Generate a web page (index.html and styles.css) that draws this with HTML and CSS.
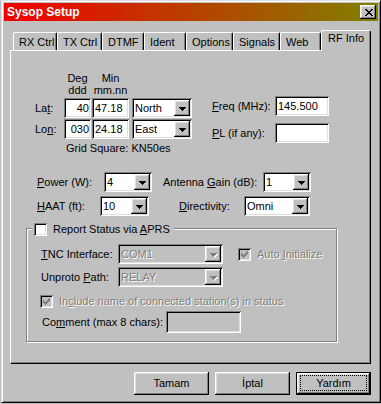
FILE: index.html
```html
<!DOCTYPE html>
<html>
<head>
<meta charset="utf-8">
<title>Sysop Setup</title>
<link rel="stylesheet" href="styles.css">
</head>
<body>
<div class="window">
  <div class="titlebar">
    <span class="title">Sysop Setup</span>
    <div class="close">
      <svg width="8" height="7" viewBox="0 0 8 7"><path fill="#000" d="M0 0h2v1H0zM6 0h2v1H6zM1 1h2v1H1zM5 1h2v1H5zM2 2h4v1H2zM3 3h2v1H3zM2 4h4v1H2zM1 5h2v1H1zM5 5h2v1H5zM0 6h2v1H0zM6 6h2v1H6z"/></svg>
    </div>
  </div>
  <div class="dialog">
    <div class="tabs">
      <div class="tab t-rx">RX Ctrl</div>
      <div class="tab t-tx">TX Ctrl</div>
      <div class="tab t-dtmf">DTMF</div>
      <div class="tab t-ident">Ident</div>
      <div class="tab t-opt">Options</div>
      <div class="tab t-sig">Signals</div>
      <div class="tab t-web">Web</div>
      <div class="tab active t-rf">RF Info</div>
    </div>
    <div class="panel">
      <div class="sec-loc">
        <div class="coords">
          <div class="cell"></div>
          <div class="hdr hdr-deg">Deg<br>ddd</div>
          <div class="hdr hdr-min">Min<br>mm.nn</div>
          <div class="cell"></div>

          <div class="lbl">La<u>t</u>:</div>
          <div class="field f-deg">40</div>
          <div class="field f-min">47.18</div>
          <div class="combo c-dir"><span class="val">North</span><span class="drop"><svg width="7" height="4" viewBox="0 0 7 4"><path fill="#000" d="M0 0h7v1H0zM1 1h5v1H1zM2 2h3v1H2zM3 3h1v1H3z"/></svg></span></div>

          <div class="lbl">Lo<u>n</u>:</div>
          <div class="field f-deg">030</div>
          <div class="field f-min">24.18</div>
          <div class="combo c-dir"><span class="val">East</span><span class="drop"><svg width="7" height="4" viewBox="0 0 7 4"><path fill="#000" d="M0 0h7v1H0zM1 1h5v1H1zM2 2h3v1H2zM3 3h1v1H3z"/></svg></span></div>

          <div class="cell"></div>
          <div class="gridsq">Grid Square: KN50es</div>
        </div>
        <div class="freq">
          <div class="frow">
            <div class="lbl l-freq"><u>F</u>req (MHz):</div>
            <div class="field f-freq">145.500</div>
          </div>
          <div class="frow pl">
            <div class="lbl l-freq"><u>P</u>L (if any):</div>
            <div class="field f-freq"></div>
          </div>
        </div>
      </div>

      <div class="row2">
        <div class="lbl l-power"><u>P</u>ower (W):</div>
        <div class="combo c-small"><span class="val">4</span><span class="drop"><svg width="7" height="4" viewBox="0 0 7 4"><path fill="#000" d="M0 0h7v1H0zM1 1h5v1H1zM2 2h3v1H2zM3 3h1v1H3z"/></svg></span></div>
        <div class="lbl l-gain">Antenna <u>G</u>ain (dB):</div>
        <div class="combo c-small"><span class="val">1</span><span class="drop"><svg width="7" height="4" viewBox="0 0 7 4"><path fill="#000" d="M0 0h7v1H0zM1 1h5v1H1zM2 2h3v1H2zM3 3h1v1H3z"/></svg></span></div>
      </div>
      <div class="row2 second">
        <div class="lbl l-haat"><u>H</u>AAT (ft):</div>
        <div class="combo c-haat"><span class="val">10</span><span class="drop"><svg width="7" height="4" viewBox="0 0 7 4"><path fill="#000" d="M0 0h7v1H0zM1 1h5v1H1zM2 2h3v1H2zM3 3h1v1H3z"/></svg></span></div>
        <div class="lbl l-dir"><u>D</u>irectivity:</div>
        <div class="combo c-omni"><span class="val">Omni</span><span class="drop"><svg width="7" height="4" viewBox="0 0 7 4"><path fill="#000" d="M0 0h7v1H0zM1 1h5v1H1zM2 2h3v1H2zM3 3h1v1H3z"/></svg></span></div>
      </div>

      <div class="group">
        <div class="legend">
          <span class="check"></span>
          <span class="legend-text">Report Status via <u>A</u>PRS</span>
        </div>
        <div class="grow first">
          <div class="lbl l-tnc"><u>T</u>NC Interface:</div>
          <div class="combo disabled c-wide"><span class="val">COM1</span><span class="drop"><svg width="8" height="5" viewBox="0 0 8 5"><path fill="#fff" d="M1 1h7v1H1zM2 2h5v1H2zM3 3h3v1H3zM4 4h1v1H4z"/><path fill="#808080" d="M0 0h7v1H0zM1 1h5v1H1zM2 2h3v1H2zM3 3h1v1H3z"/></svg></span></div>
          <span class="check disabled c-auto"><svg width="7" height="7" viewBox="0 0 7 7"><path fill="#808080" d="M6 0h1v1H6zM5 1h2v1H5zM0 2h1v1H0zM4 2h3v1H4zM0 3h2v1H0zM3 3h3v1H3zM0 4h5v1H0zM1 5h3v1H1zM2 6h1v1H2z"/></svg></span>
          <span class="dis-text auto-text">Auto <u>I</u>nitialize</span>
        </div>
        <div class="grow">
          <div class="lbl l-tnc">Unproto <u>P</u>ath:</div>
          <div class="combo disabled c-wide"><span class="val">RELAY</span><span class="drop"><svg width="8" height="5" viewBox="0 0 8 5"><path fill="#fff" d="M1 1h7v1H1zM2 2h5v1H2zM3 3h3v1H3zM4 4h1v1H4z"/><path fill="#808080" d="M0 0h7v1H0zM1 1h5v1H1zM2 2h3v1H2zM3 3h1v1H3z"/></svg></span></div>
        </div>
        <div class="crow">
          <span class="check disabled"><svg width="7" height="7" viewBox="0 0 7 7"><path fill="#808080" d="M6 0h1v1H6zM5 1h2v1H5zM0 2h1v1H0zM4 2h3v1H4zM0 3h2v1H0zM3 3h3v1H3zM0 4h5v1H0zM1 5h3v1H1zM2 6h1v1H2z"/></svg></span>
          <span class="dis-text inc-text">In<u>c</u>lude name of connected station(s) in status</span>
        </div>
        <div class="mrow">
          <div class="lbl l-comment">Co<u>m</u>ment (max 8 chars):</div>
          <div class="field disabled f-comment"></div>
        </div>
      </div>
    </div>
    <div class="buttons">
      <div class="btn">Tamam</div>
      <div class="btn">İptal</div>
      <div class="btn default"><span class="focus">Yardım</span></div>
    </div>
  </div>
</div>
</body>
</html>
```

FILE: styles.css
```css
* { box-sizing: border-box; }
html, body { margin: 0; padding: 0; }
body {
  width: 381px;
  height: 404px;
  overflow: hidden;
  background: #c0c0c0;
  font-family: "Liberation Sans", Arial, sans-serif;
  font-size: 11px;
  color: #000;
}
u { text-decoration: underline; text-underline-offset: 1px; }

.window {
  margin-left: 1px;
  width: 380px;
  height: 403px;
  padding: 2px;
  background: #c0c0c0;
  border: 1px solid;
  border-color: #dfdfdf #000 #000 #dfdfdf;
  box-shadow: inset 1px 1px 0 #fff, inset -1px -1px 0 #808080;
}

.titlebar {
  height: 18px;
  display: flex;
  align-items: center;
  padding: 0 2px 0 3px;
  background: linear-gradient(to right, #f20000, #808000);
}
.title {
  color: #fff;
  font-weight: bold;
  font-size: 12px;
  line-height: 18px;
}
.close {
  margin-left: auto;
  width: 16px;
  height: 14px;
  background: #c0c0c0;
  display: flex;
  align-items: center;
  justify-content: center;
  padding-left: 1px;
  box-shadow: inset -1px -1px 0 #000, inset 1px 1px 0 #fff, inset -2px -2px 0 #808080, inset 2px 2px 0 #dfdfdf;
}
.close svg { display: block; }

.dialog { padding: 9px 7px 0 6px; }

.tabs {
  display: flex;
  align-items: flex-end;
  height: 20px;
  padding-left: 3px;
}
.tab {
  height: 18px;
  padding: 3px 0 0 5px;
  line-height: 13px;
  white-space: nowrap;
  background: #c0c0c0;
  border-top: 1px solid #fff;
  border-left: 1px solid #fff;
  border-right: 1px solid #000;
  border-radius: 2px 2px 0 0;
  box-shadow: inset -1px 0 0 #808080;
}
.t-rx { width: 44px; }
.t-tx { width: 45px; }
.t-dtmf { width: 42px; }
.t-ident { width: 42px; }
.t-opt { width: 47px; }
.t-sig { width: 47px; }
.t-web { width: 41px; }
.tab.active {
  width: 50px;
  height: 21px;
  margin-bottom: -1px;
  padding: 1px 0 0 6px;
  position: relative;
  z-index: 1;
}

.panel {
  height: 314px;
  border-top: 1px solid #fff;
  border-left: 1px solid #fff;
  border-right: 1px solid #000;
  border-bottom: 1px solid #000;
  box-shadow: inset -1px -1px 0 #808080;
}

/* Sunken and raised bevels */
.field, .combo, .check {
  background: #fff;
  box-shadow: inset 1px 1px 0 #808080, inset -1px -1px 0 #fff, inset 2px 2px 0 #000, inset -2px -2px 0 #dfdfdf;
}
.field.disabled, .combo.disabled, .check.disabled { background: #c0c0c0; }

.field {
  height: 20px;
  padding: 0 2px 0 3px;
  line-height: 20px;
  white-space: nowrap;
}
.combo {
  height: 20px;
  display: flex;
  padding: 2px;
}
.combo .val {
  flex: 1;
  line-height: 16px;
  padding-left: 1px;
  white-space: nowrap;
}
.combo .drop {
  width: 16px;
  height: 16px;
  display: flex;
  align-items: center;
  justify-content: center;
  background: #c0c0c0;
  box-shadow: inset -1px -1px 0 #000, inset 1px 1px 0 #fff, inset -2px -2px 0 #808080, inset 2px 2px 0 #dfdfdf;
}
.combo .drop svg { display: block; margin-top: 1px; }
.combo.disabled .val { color: #808080; text-shadow: 1px 1px 0 #fff; }
.combo.disabled .drop svg { margin-left: 1px; margin-top: 2px; }

.check {
  width: 13px;
  height: 13px;
  flex: none;
  display: flex;
  align-items: center;
  justify-content: center;
}
.check svg { display: block; }

.lbl {
  line-height: 20px;
  white-space: nowrap;
}
.dis-text { color: #808080; text-shadow: 1px 1px 0 #fff; white-space: nowrap; }

/* Location section */
.sec-loc {
  display: flex;
  margin-top: 21px;
  padding-left: 24px;
}
.coords {
  display: grid;
  grid-template-columns: 29px 28px 40px 60px;
  grid-template-rows: 26px 21px 21px 17px;
}
.hdr {
  line-height: 12px;
  text-align: center;
}
.hdr-deg { width: 27px; }
.hdr-min { width: 37px; }
.f-deg { width: 27px; text-align: right; padding-right: 2px; }
.f-min { width: 37px; }
.c-dir { width: 60px; }
.gridsq {
  grid-column: 2 / span 3;
  padding: 2px 0 0 2px;
  line-height: 13px;
  white-space: nowrap;
}

.freq {
  margin-left: 20px;
  margin-top: 24px;
}
.frow { display: flex; height: 20px; }
.frow.pl { margin-top: 7px; }
.l-freq { width: 63px; }
.f-freq { width: 54px; }

/* Power / antenna rows */
.row2 {
  display: flex;
  align-items: center;
  height: 20px;
  margin-top: 15px;
  padding-left: 26px;
}
.row2.second { margin-top: 4px; }
.l-power { width: 67px; }
.c-small { width: 48px; }
.l-gain { width: 100px; margin-left: 11px; }
.l-haat { width: 63px; }
.c-haat { width: 49px; }
.l-dir { width: 65px; margin-left: 30px; }
.c-omni { width: 66px; }

/* Group box */
.group {
  margin: 12px 0 0 15px;
  width: 311px;
  padding-bottom: 8px;
  border: 1px solid #808080;
  box-shadow: inset 1px 1px 0 #fff, 1px 1px 0 #fff;
}
.legend {
  display: flex;
  align-items: center;
  width: fit-content;
  height: 13px;
  margin: -6px 0 0 5px;
  padding: 0 4px 0 2px;
  background: #c0c0c0;
}
.legend-text { margin-left: 6px; line-height: 13px; white-space: nowrap; }

.grow {
  display: flex;
  align-items: center;
  height: 20px;
  margin-top: 3px;
  padding-left: 14px;
}
.grow.first { margin-top: 8px; }
.l-tnc { width: 77px; }
.c-wide { width: 105px; }
.c-auto { margin-left: 15px; }
.auto-text { margin-left: 6px; line-height: 13px; }

.crow {
  display: flex;
  align-items: center;
  height: 13px;
  margin-top: 8px;
  padding-left: 13px;
}
.inc-text { margin-left: 6px; line-height: 13px; }

.mrow {
  display: flex;
  align-items: center;
  height: 22px;
  margin-top: 3px;
  padding-left: 15px;
}
.l-comment { width: 124px; }
.f-comment { width: 75px; height: 22px; }

/* Buttons */
.buttons {
  display: flex;
  justify-content: flex-end;
  gap: 6px;
  margin-top: 8px;
}
.btn {
  width: 75px;
  height: 23px;
  display: flex;
  align-items: center;
  justify-content: center;
  background: #c0c0c0;
  line-height: 13px;
  box-shadow: inset -1px -1px 0 #000, inset 1px 1px 0 #fff, inset -2px -2px 0 #808080, inset 2px 2px 0 #dfdfdf;
}
.btn.default {
  border: 1px solid #000;
  padding: 2px 3px 3px 3px;
  box-shadow: inset -1px -1px 0 #000, inset 1px 1px 0 #fff, inset -2px -2px 0 #808080, inset 2px 2px 0 #dfdfdf;
}
.focus {
  flex: 1;
  align-self: stretch;
  display: flex;
  align-items: center;
  justify-content: center;
  border: 1px dotted #000;
}
```
